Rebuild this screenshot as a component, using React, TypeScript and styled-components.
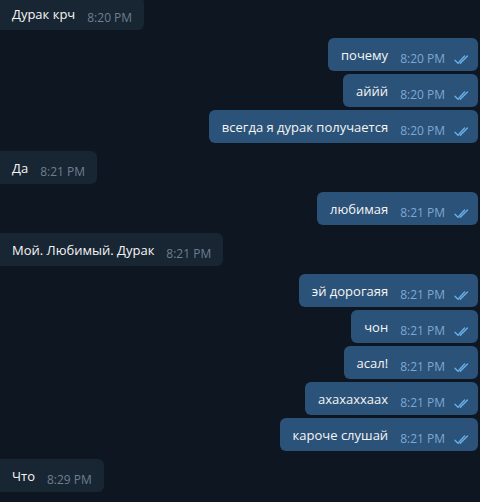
import styled, { createGlobalStyle } from 'styled-components'

type Side = 'in' | 'out'

interface Message {
  text: string
  time: string
}

interface Group {
  side: Side
  messages: Message[]
}

const groups: Group[] = [
  { side: 'in', messages: [{ text: 'Дурак крч', time: '8:20 PM' }] },
  {
    side: 'out',
    messages: [
      { text: 'почему', time: '8:20 PM' },
      { text: 'аййй', time: '8:20 PM' },
      { text: 'всегда я дурак получается', time: '8:20 PM' },
    ],
  },
  { side: 'in', messages: [{ text: 'Да', time: '8:21 PM' }] },
  { side: 'out', messages: [{ text: 'любимая', time: '8:21 PM' }] },
  { side: 'in', messages: [{ text: 'Мой. Любимый. Дурак', time: '8:21 PM' }] },
  {
    side: 'out',
    messages: [
      { text: 'эй дорогаяя', time: '8:21 PM' },
      { text: 'чон', time: '8:21 PM' },
      { text: 'асал!', time: '8:21 PM' },
      { text: 'ахахаххаах', time: '8:21 PM' },
      { text: 'кароче слушай', time: '8:21 PM' },
    ],
  },
  { side: 'in', messages: [{ text: 'Что', time: '8:29 PM' }] },
  {
    side: 'out',
    messages: [
      {
        text: 'короче я сегодня весь день думал о тебе и вообще хотел сказать что ты самая лучшая',
        time: '8:30 PM',
      },
    ],
  },
]

const DoubleCheck = () => (
  <svg width='16' height='10' viewBox='0 0 16 10' fill='none'>
    <path
      d='M1 5.2l3 3 6.6-7.2M6.3 8.2l7.2-7.2'
      stroke='#68aee8'
      strokeWidth='1.4'
      strokeLinecap='round'
      strokeLinejoin='round'
    />
  </svg>
)

const App = () => {
  return (
    <>
      <GlobalStyle />
      <Chat>
        {groups.map((group, gi) => (
          <GroupList key={gi} $side={group.side}>
            {group.messages.map((msg, mi) => (
              <Bubble key={mi} $side={group.side}>
                <Text>{msg.text}</Text>
                <Meta>
                  <Time $side={group.side}>{msg.time}</Time>
                  {group.side === 'out' && (
                    <Check>
                      <DoubleCheck />
                    </Check>
                  )}
                </Meta>
              </Bubble>
            ))}
          </GroupList>
        ))}
      </Chat>
    </>
  )
}

export default App

const GlobalStyle = createGlobalStyle`
  html, body {
    margin: 0;
    padding: 0;
    background: #0e1621;
    overflow: hidden;
  }
  body {
    font-family: 'Open Sans', 'Noto Sans', sans-serif;
    -webkit-font-smoothing: antialiased;
  }
`

const Chat = styled.div`
  height: 502px;
  overflow: hidden;
  display: flex;
  flex-direction: column;
  gap: 8px;
  padding: 0 2px 0 0;
  margin-top: -3px;
`

const GroupList = styled.div<{ $side: Side }>`
  display: flex;
  flex-direction: column;
  align-items: ${(p) => (p.$side === 'out' ? 'flex-end' : 'flex-start')};
  gap: 3px;
`

const Bubble = styled.div<{ $side: Side }>`
  display: flex;
  align-items: flex-end;
  max-width: 400px;
  box-sizing: border-box;
  background: ${(p) => (p.$side === 'out' ? '#2b5278' : '#182533')};
  border-radius: ${(p) => (p.$side === 'out' ? '6px' : '0 6px 6px 0')};
  padding: ${(p) => (p.$side === 'out' ? '8px 8px 5px 13px' : '8px 12px 5px 12px')};
`

const Text = styled.span`
  color: #f5f5f5;
  font-size: 13px;
  line-height: 18px;
  margin-bottom: 2px;
`

const Meta = styled.span`
  display: flex;
  align-items: center;
  flex-shrink: 0;
  margin-left: 12px;
`

const Time = styled.span<{ $side: Side }>`
  font-size: 12px;
  line-height: 14px;
  color: ${(p) => (p.$side === 'out' ? '#7da8d3' : '#6d7f8f')};
`

const Check = styled.span`
  display: flex;
  margin-left: 9px;
  margin-top: 1px;
`
